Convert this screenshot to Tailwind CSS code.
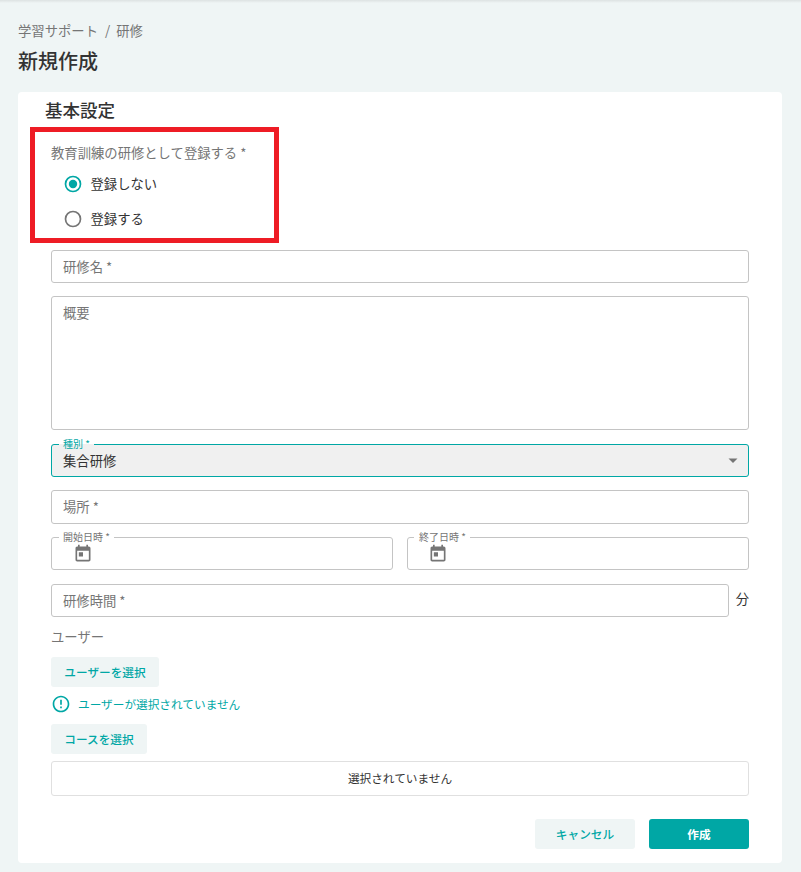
<!DOCTYPE html>
<html lang="ja">
<head>
<meta charset="utf-8">
<title>新規作成</title>
<script src="https://cdn.jsdelivr.net/npm/@tailwindcss/browser@4"></script>
</head>
<body class="w-[801px] h-[872px] overflow-hidden bg-[#eff5f5] font-['Noto_Sans_CJK_JP',sans-serif] text-[13.33px] text-[#333] leading-5">
<div class="h-[3px] bg-linear-to-b from-[#dde2e2] to-[#eff5f5]"></div>
<header class="pl-[18px]">
  <nav class="flex pt-[18px] h-[38px] text-[#757575]"><span>学習サポート</span><span class="ml-[7px] mr-[6px]">/</span><span>研修</span></nav>
  <h1 class="h-[51px] pt-[6px] text-[20px] leading-[28px] font-medium">新規作成</h1>
</header>
<main class="relative ml-[18px] w-[764px] h-[771px] bg-white rounded-[4px] pl-[33px] pr-[33px]">
  <div class="absolute left-[12px] top-[35px] w-[249px] h-[116px] border-5 border-[#ee1c25]"></div>
  <h2 class="-ml-[6px] h-[51px] pt-[5px] text-[17.5px] leading-[26px] font-medium">基本設定</h2>
  <div class="h-[107px]">
    <div class="text-[#757575]">教育訓練の研修として登録する *</div>
    <div class="flex items-center h-[35px] mt-[3px] pl-[12px] gap-[7.5px]">
      <svg class="w-5 h-5" viewBox="0 0 20 20"><circle cx="10" cy="10" r="7.5" fill="none" stroke="#00a7a5" stroke-width="1.7"/><circle cx="10" cy="10" r="4.2" fill="#00a7a5"/></svg>
      <span>登録しない</span>
    </div>
    <div class="flex items-center h-[35px] pl-[12px] gap-[7.5px]">
      <svg class="w-5 h-5" viewBox="0 0 20 20"><circle cx="10" cy="10" r="7.5" fill="none" stroke="#757575" stroke-width="1.7"/></svg>
      <span>登録する</span>
    </div>
  </div>
  <div class="h-[33px] border border-[#c4c4c4] rounded-[3px] px-[11px] pt-[6px] text-[#757575]">研修名 *</div>
  <div class="mt-[13px] h-[134px] border border-[#c4c4c4] rounded-[3px] px-[11px] pt-[6px] text-[#757575]">概要</div>
  <div class="relative mt-[14px] h-[33px] rounded-[3px] bg-[#f0f0f0] pl-[12px] pr-[10px] flex items-center justify-between">
    <fieldset class="absolute inset-0 border border-[#00a7a5] rounded-[3px] pl-[7px]"><legend class="h-px w-[35px]"></legend></fieldset>
    <span class="absolute left-[12px] -top-[7px] text-[10px] leading-[14px] text-[#00a7a5]">種別 *</span>
    <span>集合研修</span>
    <svg class="w-3 h-3" viewBox="0 0 12 12"><path d="M1.5 3.500h9L6 8z" fill="#757575"/></svg>
  </div>
  <div class="mt-[13px] h-[34px] border border-[#c4c4c4] rounded-[3px] px-[11px] pt-[6px] text-[#757575]">場所 *</div>
  <div class="mt-[13px] flex gap-[14px]">
    <div class="relative w-[342px] h-[33px] pl-[22px] pt-[7px]">
      <fieldset class="absolute inset-0 border border-[#c4c4c4] rounded-[3px] pl-[7px]"><legend class="h-px w-[55px]"></legend></fieldset>
      <span class="absolute left-[12px] -top-[7px] text-[10px] leading-[14px] text-[#757575]">開始日時 *</span>
      <svg class="w-5 h-5" viewBox="0 0 24 24" fill="#757575"><path d="M19 3h-1V1h-2v2H8V1H6v2H5c-1.110 0-1.990.9-1.990 2L3 19c0 1.100.890 2 2 2h14c1.100 0 2-.9 2-2V5c0-1.100-.9-2-2-2zm0 16H5V8h14v11zM7 10h5v5H7z"/></svg>
    </div>
    <div class="relative w-[342px] h-[33px] pl-[21px] pt-[7px]">
      <fieldset class="absolute inset-0 border border-[#c4c4c4] rounded-[3px] pl-[6px]"><legend class="h-px w-[56px]"></legend></fieldset>
      <span class="absolute left-[12px] -top-[7px] text-[10px] leading-[14px] text-[#757575]">終了日時 *</span>
      <svg class="w-5 h-5" viewBox="0 0 24 24" fill="#757575"><path d="M19 3h-1V1h-2v2H8V1H6v2H5c-1.110 0-1.990.9-1.990 2L3 19c0 1.100.890 2 2 2h14c1.100 0 2-.9 2-2V5c0-1.100-.9-2-2-2zm0 16H5V8h14v11zM7 10h5v5H7z"/></svg>
    </div>
  </div>
  <div class="mt-[14px] flex h-[33px] gap-[7px]">
    <div class="w-[678px] border border-[#c4c4c4] rounded-[3px] px-[11px] pt-[6px] text-[#757575]">研修時間 *</div>
    <span class="pt-[5px]">分</span>
  </div>
  <div class="mt-[10px] h-[30px] text-[#757575]">ユーザー</div>
  <button class="block w-[108px] h-[30px] rounded-[3px] bg-[#eff5f5] text-[#00a7a5] text-[11.66px] font-medium">ユーザーを選択</button>
  <div class="flex items-center h-[37px] pb-[3px] gap-[7px] text-[#00a7a5] text-[11.66px]">
    <svg class="w-5 h-5" viewBox="0 0 24 24" fill="#00a7a5"><path d="M11 15h2v2h-2zm0-8h2v6h-2zm.99-5C6.470 2 2 6.480 2 12s4.470 10 9.990 10C17.520 22 22 17.520 22 12S17.520 2 11.990 2zM12 20c-4.420 0-8-3.580-8-8s3.580-8 8-8 8 3.580 8 8-3.580 8-8 8z"/></svg>
    <span>ユーザーが選択されていません</span>
  </div>
  <button class="block w-[96px] h-[30px] rounded-[3px] bg-[#eff5f5] text-[#00a7a5] text-[11.66px] font-medium">コースを選択</button>
  <div class="mt-[7px] h-[35px] pb-px border border-[#e0e0e0] rounded-[3px] flex items-center justify-center text-[11.66px]">選択されていません</div>
  <div class="mt-[23px] flex justify-end gap-[14px] text-[11.66px]">
    <button class="w-[100px] h-[30px] rounded-[3px] bg-[#eff5f5] text-[#00a7a5] font-medium">キャンセル</button>
    <button class="w-[100px] h-[30px] rounded-[3px] bg-[#00a7a5] text-white font-bold">作成</button>
  </div>
</main>
</body>
</html>
